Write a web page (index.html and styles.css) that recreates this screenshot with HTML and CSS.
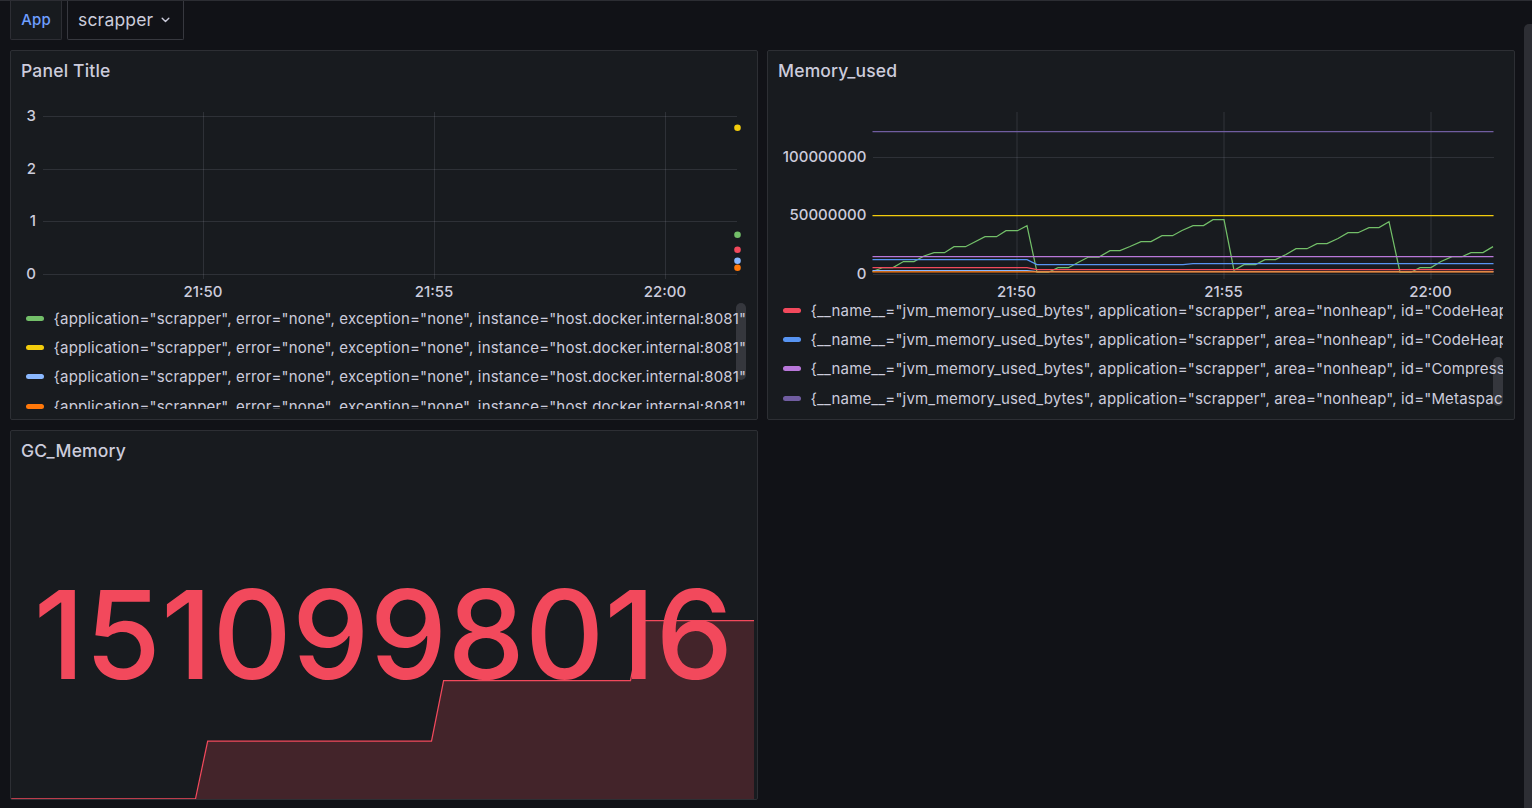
FILE: index.html
```html
<!DOCTYPE html>
<html lang="en">
<head>
<meta charset="utf-8">
<title>Dashboard</title>
<link rel="stylesheet" href="styles.css">
</head>
<body>
<div class="page">
  <main class="dashboard">
    <div class="controls">
      <span class="variable-label">App</span>
      <button class="variable-value"><span>scrapper</span>
        <svg class="chevron" width="9" height="6" viewBox="0 0 9 6"><path d="M1.2 1.2 4.5 4.4 7.8 1.2"/></svg>
      </button>
    </div>
    <div class="grid">
      <section class="panel">
        <h2>Panel Title</h2>
        <svg class="chart" viewBox="11 92 746 211">
          <path class="gridline" d="M43 116.5H737M43 169.5H737M43 221.5H737M43 274.5H737M203.5 112V279M434.5 112V279M665.5 112V279"/>
          <g class="axis end"><text x="36" y="121">3</text><text x="36" y="174">2</text><text x="36" y="226">1</text><text x="36" y="279">0</text></g>
          <g class="axis mid"><text x="203" y="297">21:50</text><text x="434" y="297">21:55</text><text x="665" y="297">22:00</text></g>
          <circle cx="737.5" cy="127.7" r="3.3" fill="#f2cc0c"/>
          <circle cx="737.5" cy="234.7" r="3.3" fill="#73bf69"/>
          <circle cx="737.5" cy="249.7" r="3.3" fill="#f2495c"/>
          <circle cx="737.5" cy="260.7" r="3.3" fill="#8ab8ff"/>
          <circle cx="737.5" cy="267.7" r="3.3" fill="#ff780a"/>
        </svg>
        <div class="legend legend-first">
          <div class="row"><i class="green"></i><span>{application="scrapper", error="none", exception="none", instance="host.docker.internal:8081"</span></div>
          <div class="row"><i class="yellow"></i><span>{application="scrapper", error="none", exception="none", instance="host.docker.internal:8081"</span></div>
          <div class="row"><i class="lightblue"></i><span>{application="scrapper", error="none", exception="none", instance="host.docker.internal:8081"</span></div>
          <div class="row"><i class="orange"></i><span>{application="scrapper", error="none", exception="none", instance="host.docker.internal:8081"</span></div>
          <div class="thumb thumb-top"></div>
        </div>
      </section>
      <section class="panel">
        <h2>Memory_used</h2>
        <svg class="chart" viewBox="768 92 746 211">
          <path class="gridline" d="M873 157.5H1494M873 215.5H1494M873 274.5H1494"/>
          <path class="gridline wide" d="M1017 112V279M1224 112V279M1431 112V279"/>
          <g class="axis end"><text x="866.5" y="162">100000000</text><text x="866.5" y="220">50000000</text><text x="866.5" y="279">0</text></g>
          <g class="axis mid"><text x="1016.5" y="297">21:50</text><text x="1223.5" y="297">21:55</text><text x="1430.5" y="297">22:00</text></g>
          <g class="series">
            <path stroke="#73bf69" d="M872.5 271.5 883 267.5H893L903.5 261.5H914L924 256 934 252.7H944.5L954 246.7H965.5L985 236.7H996.5L1006 230.7H1017.5L1027 225.7 1037 272.2H1048.5L1058 267.7H1068.5L1078 262.5 1088.5 257H1099L1110 250.6H1120L1130 246.5 1141 241.6H1151L1162 235.7H1172.5L1182 230.5 1193 225.6H1203.5L1213 219.6H1224L1234 270.3 1244 264.6H1255.5L1265 259.6H1275.5L1286 254.5 1296 248.7H1307L1317 243.6H1327L1338 238.5 1348 232.7H1358L1369 227.6H1379L1389 221.7 1400 272.2H1411L1420 267.6H1431L1441 261.5 1452 256.7H1462L1471 252.6H1483L1493 246.6"/>
            <path stroke="#f2cc0c" d="M872.5 215.6H1493.5"/>
            <path stroke="#8ab8ff" d="M872.5 270.6H1027L1037 271.6H1493.5"/>
            <path stroke="#ff780a" d="M872.5 271.8H1493.5"/>
            <path stroke="#f2495c" d="M872.5 267.6H1027L1037 269.6H1493.5"/>
            <path stroke="#5794f2" d="M872.5 259.6H1027L1037 264.6H1183L1193 263.6H1493.5"/>
            <path stroke="#b877d9" d="M872.5 256.6H1493.5"/>
            <path stroke="#705da0" d="M872.5 131.7H1493.5"/>
          </g>
        </svg>
        <div class="legend legend-scrolled">
          <div class="row"><i class="red"></i><span>{__name__="jvm_memory_used_bytes", application="scrapper", area="nonheap", id="CodeHeap</span></div>
          <div class="row"><i class="blue"></i><span>{__name__="jvm_memory_used_bytes", application="scrapper", area="nonheap", id="CodeHeap</span></div>
          <div class="row"><i class="purple"></i><span>{__name__="jvm_memory_used_bytes", application="scrapper", area="nonheap", id="Compress</span></div>
          <div class="row"><i class="violet"></i><span>{__name__="jvm_memory_used_bytes", application="scrapper", area="nonheap", id="Metaspac</span></div>
          <div class="thumb thumb-bottom"></div>
        </div>
      </section>
      <section class="panel">
        <h2>GC_Memory</h2>
        <svg class="chart" viewBox="11 472 746 327">
          <path fill="#f2495c" fill-opacity=".2" d="M11 799H196L208 741H431.500L443.500 680.700H630.500L642.500 620.500H754V799Z"/>
          <path fill="none" stroke="#f2495c" stroke-width="1.25" d="M11 798.800H195.500L207.700 741H431.500L443.600 680.700H630.500L642.500 620.500H754"/>
          <text class="big-value" x="33.7" y="679" textLength="699.5">1510998016</text>
        </svg>
      </section>
    </div>
  </main>
  <div class="page-scroll"></div>
</div>
</body>
</html>
```
FILE: styles.css
```css
* { box-sizing: border-box; }
body {
  margin: 0;
  background: #111217;
  color: #ccccdc;
  font-family: Inter, "Liberation Sans", sans-serif;
}
.page {
  display: flex;
  justify-content: space-between;
  height: 808px;
  overflow: hidden;
  border-top: 1px solid #2c2d33;
}
.dashboard { width: 1516px; padding-left: 10px; }
.controls { display: flex; gap: 5px; height: 39px; }
.variable-label, .variable-value {
  display: flex;
  align-items: center;
  height: 39px;
  border: 1px solid #2d2e34;
  border-top: 0;
  border-radius: 0 0 2px 2px;
}
.variable-label {
  width: 52px;
  justify-content: center;
  padding-bottom: 2px;
  background: #181b1f;
  color: #6e9fff;
  font-size: 15px;
  font-weight: 500;
  letter-spacing: .15px;
}
.variable-value {
  width: 117px;
  padding: 0 0 1px 10px;
  gap: 8px;
  background: #111217;
  border-color: #37383f;
  color: #ccccdc;
  font: 17.5px Inter, sans-serif;
  letter-spacing: .19px;
}
.chevron { fill: none; stroke: #ccccdc; stroke-width: 1.4; stroke-linecap: round; stroke-linejoin: round; }
.grid {
  display: grid;
  grid-template-columns: 748px 748px;
  grid-auto-rows: 370px;
  gap: 10px 9px;
  margin-top: 10px;
}
.panel {
  display: flex;
  flex-direction: column;
  background: #181b1f;
  border: 1px solid #2d2f34;
  border-radius: 2px;
  overflow: hidden;
}
h2 {
  flex: none;
  height: 41px;
  margin: 0;
  padding-left: 10px;
  font-size: 17.5px;
  font-weight: 500;
  line-height: 40px;
  letter-spacing: .19px;
}
.chart { display: block; flex: none; width: 746px; }
.gridline { fill: none; stroke: rgba(204, 204, 220, .13); stroke-width: 1; }
.gridline.wide { stroke: rgba(204, 204, 220, .07); stroke-width: 2; }
.axis { fill: #ccccdc; font-size: 15px; font-weight: 500; }
.end { text-anchor: end; }
.mid { text-anchor: middle; }
.series path { fill: none; stroke-width: 1.25; }
.big-value { fill: #f2495c; font-size: 122.8px; font-weight: 500; }
.legend {
  position: relative;
  width: 721px;
  margin-left: 14px;
  overflow: hidden;
}
.legend-first { height: 106px; padding-top: 1px; }
.legend-scrolled { height: 106px; }
.legend-scrolled .row:first-child { margin-top: -7px; }
.row {
  display: flex;
  align-items: center;
  gap: 9.5px;
  height: 29.2px;
  padding-left: 1px;
  font-size: 15px;
  letter-spacing: .16px;
  white-space: nowrap;
}
.row i { flex: none; width: 18px; height: 5px; border-radius: 3px; }
.green { background: #73bf69; }
.yellow { background: #f2cc0c; }
.lightblue { background: #8ab8ff; }
.orange { background: #ff780a; }
.red { background: #f2495c; }
.blue { background: #5794f2; }
.purple { background: #b877d9; }
.violet { background: #705da0; }
.thumb {
  position: absolute;
  right: 0;
  width: 10px;
  border-radius: 5px;
  background: rgba(204, 204, 220, .16);
}
.thumb-top { top: 0; height: 77px; }
.thumb-bottom { top: 54px; height: 49px; }
.page-scroll { width: 8px; margin-top: 23px; background: #2d2e34; border-radius: 5px 0 0 0; }
```
